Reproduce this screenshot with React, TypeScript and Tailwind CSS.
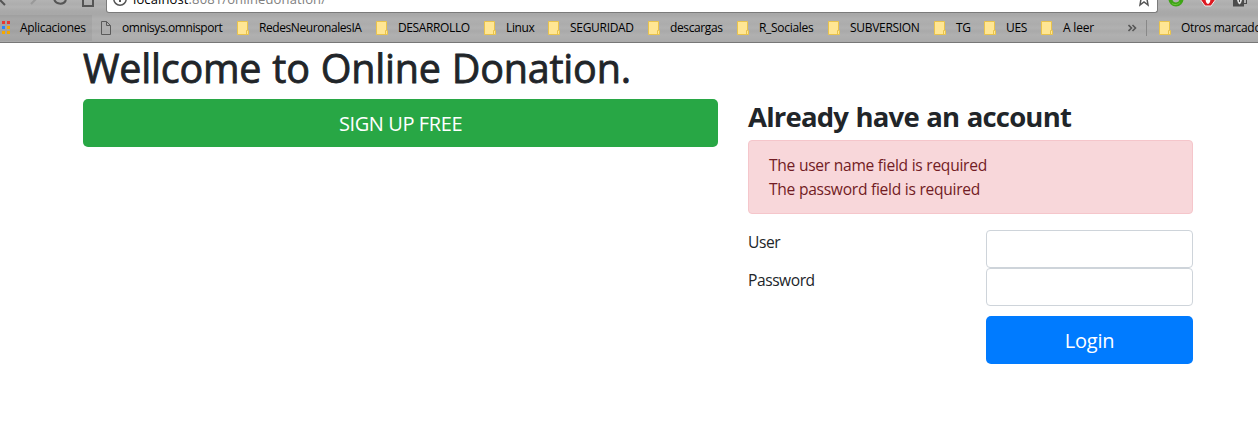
import React from "react";

const bookmarks = [
  { label: "RedesNeuronalesIA", cls: "w-[139px] tracking-[-0.42px]" },
  { label: "DESARROLLO", cls: "w-[108px] tracking-[-0.38px]" },
  { label: "Linux", cls: "w-[64px] tracking-[-0.38px]" },
  { label: "SEGURIDAD", cls: "w-[100px] tracking-[-0.3px]" },
  { label: "descargas", cls: "w-[89px] tracking-[-0.38px]" },
  { label: "R_Sociales", cls: "w-[91px] tracking-[-0.3px]" },
  { label: "SUBVERSION", cls: "w-[106px] tracking-[-0.3px]" },
  { label: "TG", cls: "w-[50px] tracking-[-0.3px]" },
  { label: "UES", cls: "w-[57px] tracking-[-0.3px]" },
  { label: "A leer", cls: "w-[87px] tracking-[-0.2px]" },
];

function Folder() {
  return (
    <svg className="mr-[10px] h-[14px] w-[12px] shrink-0" viewBox="0 0 12 14">
      <path d="M.5 .5h10v9h1v4H.5z" fill="#ffe694" stroke="#e9c34c" />
      <path d="M9.5 13V9.5h1" fill="none" stroke="#e9c34c" />
    </svg>
  );
}

export default function App() {
  return (
    <div className="h-[438px] w-[1258px] overflow-hidden bg-white font-['Open_Sans',sans-serif] text-[#212529]">
      <header className="h-[43px] border-b border-[#777] bg-[#adadad] bg-[linear-gradient(180deg,#b3b3b3_0px,#adadad_4px,#b2b2b2_7px,#a9a9a9_11px,#a8a8a8_15px,#b0b0b0_19px,#acacac_24px,#b1b1b1_28px,#a9a9a9_31px,#b0b0b0_35px,#aaaaaa_42px)]">
        <div className="flex h-[13px]">
          <svg className="h-[13px] w-[106px] shrink-0" viewBox="0 0 106 13" fill="none" stroke="#555" strokeWidth="2">
            <path d="M-1 -1l6 6" />
            <path d="M31 4l6-6" stroke="#999" />
            <path d="M54 -2a6.300 6.300 0 0 0 12 2" />
            <path d="M83 -2v8h10v-8" />
          </svg>
          <div className="flex w-[1052px] items-start justify-between rounded-b-[3px] border-x border-b border-[#7b7b7b] bg-white pl-[6px] pr-[6px]">
            <div className="flex">
              <svg className="h-[7px] w-[14px]" viewBox="0 0 14 7" fill="none" stroke="#555" strokeWidth="1.500">
                <circle cx="7" cy="-1" r="6.200" />
                <path d="M7 -2v4" strokeWidth="2" />
              </svg>
              <div className="ml-[6px] mt-[-9px] whitespace-nowrap text-[13px] leading-[17px] tracking-[0.12px] text-[#808080]">
                <span className="text-black">localhost</span>:8081/onlinedonation/
              </div>
            </div>
            <svg className="h-[7px] w-[14px]" viewBox="0 0 14 7" fill="none" stroke="#555" strokeWidth="1.500">
              <path d="M4 -1L3 5l4-3 4 3-1-6" />
            </svg>
          </div>
          <svg className="h-[13px] w-[100px] shrink-0" viewBox="0 0 100 13">
            <circle cx="18" cy="-1" r="5.500" fill="none" stroke="#3fa516" strokeWidth="4" />
            <path d="M14 3.500a6 6 0 0 0 8-1" fill="none" stroke="#6cc23b" strokeWidth="1" />
            <path d="M42 -1l5 7h6l5-7z" fill="#dd1820" stroke="#eee" />
            <ellipse cx="50" cy="-2" rx="2.500" ry="6" fill="#fff" />
            <path d="M75 0h11v3h2V0h1v4h-3v2.500H75z" fill="#4c4c4c" />
            <path d="M79 0l1 3 1.500 1.500L83 3l1-3z" fill="#ddd" />
            <path d="M81 0h1v2h-1z" fill="#4c4c4c" />
          </svg>
        </div>
        <div className="flex h-[29px] items-center whitespace-nowrap text-[12px] text-black">
          <div className="flex h-[26px] w-[92px] shrink-0 items-center bg-black/5">
            <svg className="ml-[2px] mr-[10px] h-[14px] w-[8px]" viewBox="0 0 8 14">
              <path d="M0 0h3v3H0zM5 0h3v3H5z" fill="#e8382e" />
              <path d="M0 5h3v3H0z" fill="#2684fc" />
              <path d="M5 5h3v3H5zM0 10h3v3H0zM5 10h3v3H5z" fill="#f4a800" />
            </svg>
            <span className="tracking-[-0.3px]">Aplicaciones</span>
          </div>
          <div className="ml-[9px] flex w-[136px] shrink-0 items-center">
            <svg className="mr-[11px] h-[14px] w-[10px]" viewBox="0 0 10 14" fill="none" stroke="#5a5a5a">
              <path d="M.5 .5h5l4 4v9h-9zM5.500 .5v4h4" />
            </svg>
            <span className="tracking-[-0.42px]">omnisys.omnisport</span>
          </div>
          {bookmarks.map((b) => (
            <div key={b.label} className={`flex shrink-0 items-center ${b.cls}`}>
              <Folder />
              {b.label}
            </div>
          ))}
          <svg className="h-[8px] w-[9px] shrink-0" viewBox="0 0 9 8" fill="none" stroke="#555" strokeWidth="1.600">
            <path d="M.5 1l3 3-3 3M4.500 1l3 3-3 3" />
          </svg>
          <div className="ml-[9px] mr-[12px] h-[16px] w-px shrink-0 bg-[#888]" />
          <Folder />
          <span className="tracking-[-0.3px]">Otros marcadores</span>
        </div>
      </header>
      <main className="ml-[83px] w-[1110px]">
        <h1 className="h-[56px] whitespace-nowrap text-[39.5px] leading-[51px] tracking-[-0.22px] [word-spacing:1px] [-webkit-text-stroke:0.8px_#212529]">Wellcome to Online Donation.</h1>
        <div className="flex items-start gap-[30px]">
          <button className="h-[48px] w-[635px] rounded-[5px] bg-[#28a745] pt-[2px] text-[20px] tracking-[-0.4px] text-white">SIGN UP FREE</button>
          <section className="w-[445px]">
            <h2 className="h-[41px] text-[27.5px] font-bold leading-[36px] tracking-[-0.8px] [word-spacing:1px]">Already have an account</h2>
            <div className="h-[74px] rounded-[4px] border border-[#f5c6cb] bg-[#f8d7da] px-[20px] py-[12px] text-[15.6px] leading-[24px] tracking-[-0.27px] text-[#721c24]">
              <p>The user name field is required</p>
              <p>The password field is required</p>
            </div>
            <form className="mt-[16px] grid grid-cols-[238px_207px] text-[15.6px] leading-[24px] tracking-[-0.45px]">
              <label htmlFor="user">User</label>
              <input id="user" className="h-[38px] rounded-[4px] border border-[#ced4da]" />
              <label htmlFor="password">Password</label>
              <input id="password" type="password" className="h-[38px] rounded-[4px] border border-[#ced4da]" />
              <button type="button" className="col-start-2 mt-[10px] h-[48px] rounded-[5px] bg-[#007bff] pt-[2px] text-[20px] tracking-[-0.2px] text-white">Login</button>
            </form>
          </section>
        </div>
      </main>
    </div>
  );
}
